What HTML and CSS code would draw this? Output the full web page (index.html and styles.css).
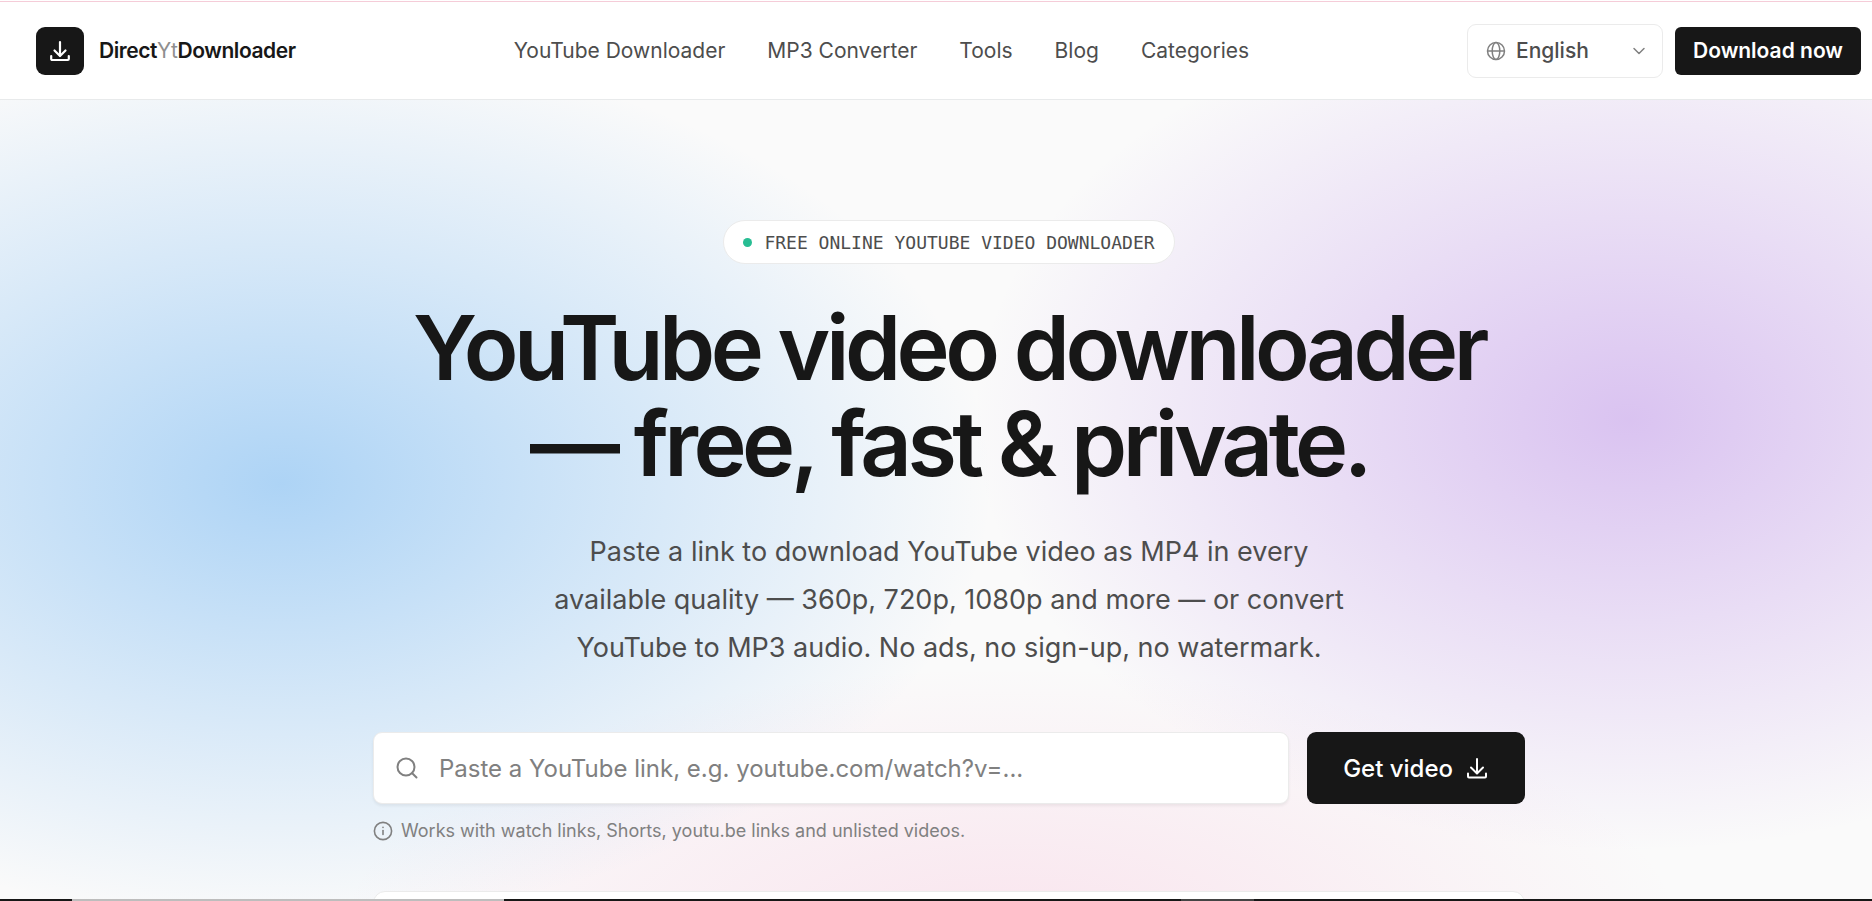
FILE: index.html
```html
<!DOCTYPE html>
<html lang="en">
<head>
  <meta charset="UTF-8">
  <meta name="viewport" content="width=device-width, initial-scale=1.0">
  <title>DirectYtDownloader</title>
  <link rel="stylesheet" href="styles.css">
</head>
<body>
  <header class="header">
    <a class="brand" href="#">
      <span class="brand-mark">
        <svg width="24" height="24" viewBox="0 0 24 24" fill="none" stroke="currentColor" stroke-width="2.2" stroke-linecap="round" stroke-linejoin="round"><path d="M12 3v13.500"/><path d="M6.500 11.500l5.500 5.500 5.500-5.500"/><path d="M3.200 17v3a1 1 0 0 0 1 1h15.600a1 1 0 0 0 1-1v-3"/></svg>
      </span>
      <span class="brand-name">Direct<span class="brand-yt">Yt</span>Downloader</span>
    </a>

    <nav class="nav">
      <a href="#">YouTube Downloader</a>
      <a href="#">MP3 Converter</a>
      <a href="#">Tools</a>
      <a href="#">Blog</a>
      <a href="#">Categories</a>
    </nav>

    <div class="header-actions">
      <div class="language">
        <svg class="language-icon" width="20" height="20" viewBox="0 0 20 20" fill="none" stroke="currentColor" stroke-width="1.500"><circle cx="10" cy="10" r="8.500"/><ellipse cx="10" cy="10" rx="3.800" ry="8.500"/><path d="M1.500 10h17"/></svg>
        <select class="language-select" aria-label="Language">
          <option>English</option>
        </select>
        <svg class="language-arrow" width="18" height="18" viewBox="0 0 18 18" fill="none" stroke="currentColor" stroke-width="1.500" stroke-linecap="round" stroke-linejoin="round"><path d="M4 6.500l5 5 5-5"/></svg>
      </div>
      <a class="download-now" href="#">Download now</a>
    </div>
  </header>

  <main class="hero">
    <div class="badge"><span class="badge-dot"></span>FREE ONLINE YOUTUBE VIDEO DOWNLOADER</div>
    <h1>YouTube video downloader — free, fast &amp; private.</h1>
    <p class="lead">Paste a link to download YouTube video as MP4 in every available quality — 360p, 720p, 1080p and more — or convert YouTube to MP3 audio. No ads, no sign-up, no watermark.</p>

    <form class="video-form">
      <label class="url-field">
        <svg width="24" height="24" viewBox="0 0 24 24" fill="none" stroke="currentColor" stroke-width="2" stroke-linecap="round"><circle cx="11" cy="11" r="8.500"/><path d="M17.200 17.200L21.500 21.500"/></svg>
        <input type="text" aria-label="YouTube link" placeholder="Paste a YouTube link, e.g. youtube.com/watch?v=...">
      </label>
      <button class="get-video" type="button">
        Get video
        <svg width="24" height="24" viewBox="0 0 24 24" fill="none" stroke="currentColor" stroke-width="2" stroke-linecap="round" stroke-linejoin="round"><path d="M12 3v14"/><path d="M6 11.500l6 6 6-6"/><path d="M3 17.500v3a1 1 0 0 0 1 1h16a1 1 0 0 0 1-1v-3"/></svg>
      </button>
    </form>

    <p class="note">
      <svg width="20" height="20" viewBox="0 0 20 20" fill="none" stroke="currentColor" stroke-width="1.600" stroke-linecap="round"><circle cx="10" cy="10" r="8.600"/><path d="M10 9.500v4"/><path d="M10 6.400v.1"/></svg>
      Works with watch links, Shorts, youtu.be links and unlisted videos.
    </p>

    <section class="preview-card"></section>
  </main>
  <div class="bottom-strip"></div>
</body>
</html>
```
FILE: styles.css
```css
* {
  box-sizing: border-box;
}

body {
  font-family: Inter, sans-serif;
  background-color: #fafafa;
  color: #171717;
  margin: 0;
  height: 100vh;
  display: flex;
  flex-direction: column;
  overflow: hidden;
}

a {
  color: inherit;
  text-decoration: none;
}

svg {
  flex-shrink: 0;
}

.header {
  display: flex;
  align-items: center;
  justify-content: space-between;
  height: 100px;
  padding: 2px 11px 0 36px;
  background: linear-gradient(#fff 1px, #f5ccd8 1px, #f5ccd8 2px, #fff 2px);
  border-bottom: 1px solid #e8eaeb;
  flex-shrink: 0;
}

.brand {
  display: flex;
  align-items: center;
  gap: 15px;
}

.brand-mark {
  display: flex;
  align-items: center;
  justify-content: center;
  width: 48px;
  height: 48px;
  border-radius: 9px;
  background-color: #171717;
  color: #fff;
}

.brand-name {
  font-size: 21px;
  font-weight: 600;
  letter-spacing: -0.02em;
}

.brand-yt {
  color: #8f8f8f;
  font-weight: 400;
}

.nav {
  display: flex;
  gap: 42px;
  font-size: 21px;
  color: #4d4d4d;
}

.header-actions {
  display: flex;
  align-items: center;
  gap: 12px;
}

.language {
  display: grid;
  align-items: center;
  width: 196px;
  height: 54px;
  border: 1px solid #ebebeb;
  border-radius: 9px;
  background-color: #fff;
  color: #808080;
}

.language > * {
  grid-area: 1 / 1;
}

.language-icon {
  margin-left: 18px;
}

.language-arrow {
  justify-self: end;
  margin-right: 14px;
}

.language-select {
  appearance: none;
  width: 100%;
  height: 100%;
  padding: 0 40px 0 48px;
  border: 0;
  background: transparent;
  font: 500 21px Inter, sans-serif;
  color: #4d4d4d;
}

.download-now {
  display: flex;
  align-items: center;
  height: 48px;
  padding: 0 18px;
  border-radius: 6px;
  background-color: #171717;
  color: #fff;
  font-size: 21px;
  font-weight: 600;
}

.hero {
  flex: 1;
  min-height: 0;
  display: flex;
  flex-direction: column;
  align-items: center;
  padding: 120px 0 0 26px;
  overflow: hidden;
  background:
    radial-gradient(ellipse 38% 55% at 15% 48%, rgba(80, 165, 240, 0.45), rgba(80, 165, 240, 0.22) 50%, transparent),
    radial-gradient(ellipse 35% 54% at 87% 40%, rgba(165, 105, 225, 0.38), rgba(165, 105, 225, 0.19) 50%, transparent),
    radial-gradient(ellipse 36% 34% at 54% 105%, rgba(245, 120, 175, 0.17), transparent),
    #fafafa;
}

.hero > * {
  flex-shrink: 0;
}

.badge {
  display: flex;
  align-items: center;
  gap: 12px;
  height: 44px;
  padding: 0 19px;
  border: 1px solid #ebebeb;
  border-radius: 22px;
  background-color: #fff;
  color: #4d4d4d;
  font: 18px "DejaVu Sans Mono", monospace;
}

.badge-dot {
  width: 9px;
  height: 9px;
  border-radius: 50%;
  background-color: #28bd93;
}

h1 {
  max-width: 1152px;
  margin: 36px 0 0;
  font-size: 90px;
  line-height: 96px;
  font-weight: 600;
  letter-spacing: -0.05em;
  text-align: center;
}

.lead {
  max-width: 816px;
  margin: 36px 0 60px;
  font-size: 27px;
  line-height: 48px;
  text-align: center;
  color: #4d4d4d;
}

.video-form {
  display: flex;
  gap: 18px;
  width: 1152px;
  max-width: 100%;
  height: 72px;
}

.url-field {
  flex: 1;
  display: flex;
  align-items: center;
  gap: 20px;
  padding: 0 21px;
  border: 1px solid #ebebeb;
  border-radius: 9px;
  background-color: #fff;
  box-shadow: 0 2px 3px rgba(0, 0, 0, 0.06);
  color: #808080;
}

.url-field input {
  flex: 1;
  min-width: 0;
  padding: 0;
  border: 0;
  outline: 0;
  background: transparent;
  font: 24px Inter, sans-serif;
  color: #171717;
}

.url-field input::placeholder {
  color: #808080;
}

.get-video {
  display: flex;
  align-items: center;
  gap: 12px;
  padding: 0 36px;
  border: 0;
  border-radius: 9px;
  background-color: #171717;
  color: #fff;
  font: 500 24px Inter, sans-serif;
}

.note {
  display: flex;
  align-items: center;
  gap: 8px;
  width: 1152px;
  max-width: 100%;
  margin: 15px 0 0;
  font-size: 18px;
  line-height: 24px;
  color: #808080;
}

.preview-card {
  width: 1152px;
  max-width: 100%;
  height: 300px;
  margin-top: 48px;
  border: 1px solid #ebebeb;
  border-radius: 12px;
  background-color: #fff;
}

.bottom-strip {
  height: 2px;
  flex-shrink: 0;
  background: linear-gradient(90deg, #171717 72px, #bdbdbd 72px, #bdbdbd 504px, #171717 504px, #171717 1181px, #444 1181px, #444 1254px, #171717 1254px);
}
```
